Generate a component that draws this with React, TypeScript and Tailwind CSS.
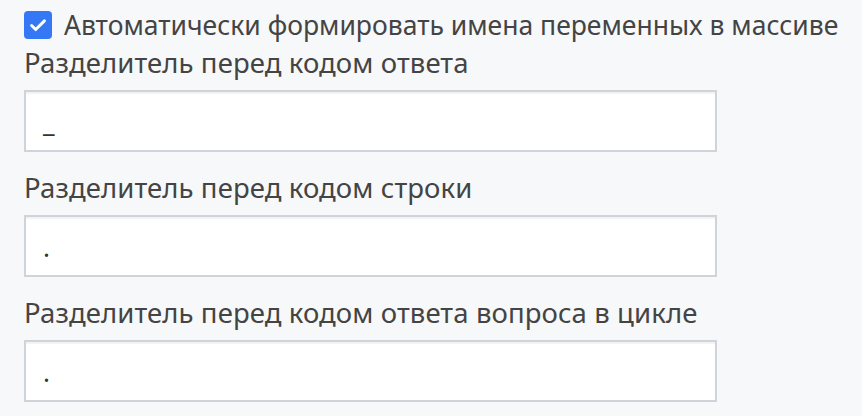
import React from 'react';

const fields = [
  { label: 'Разделитель перед кодом ответа', value: '_' },
  { label: 'Разделитель перед кодом строки', value: '.' },
  { label: 'Разделитель перед кодом ответа вопроса в цикле', value: '.' },
];

export default function App() {
  return (
    <div
      className="min-h-[416px] w-[862px] bg-[#f7f8fa] pl-6 pt-[7px] text-[#444444]"
      style={{ fontFamily: '"Noto Sans", "Open Sans", sans-serif' }}
    >
      <label className="flex h-[36px] items-center gap-3 text-[26.5px] leading-[36px]">
        <span className="flex h-[28px] w-[28px] shrink-0 items-center justify-center rounded-[4px] bg-[#3478f6]">
          <svg viewBox="0 0 24 24" className="h-[22px] w-[22px]" fill="none" stroke="white" strokeWidth="3.2" strokeLinecap="round" strokeLinejoin="round">
            <path d="M5 12.5l4.5 4.5L19 7.5" />
          </svg>
        </span>
        <span>Автоматически формировать имена переменных в массиве</span>
      </label>

      {fields.map((f, i) => (
        <div key={i}>
          <div className={`${i === 0 ? 'mt-[2px]' : 'mt-[18px]'} mb-[9px] text-[27.5px] leading-[36px] tracking-[0.1px]`}>
            {f.label}
          </div>
          <div className="flex h-[62px] w-[693px] items-center border-2 border-[#ced4da] bg-white pl-[17px] pt-[3px] text-[26px] text-[#333333] shadow-[inset_0_2px_1px_rgba(0,0,0,0.05)]">
            {f.value}
          </div>
        </div>
      ))}
    </div>
  );
}
